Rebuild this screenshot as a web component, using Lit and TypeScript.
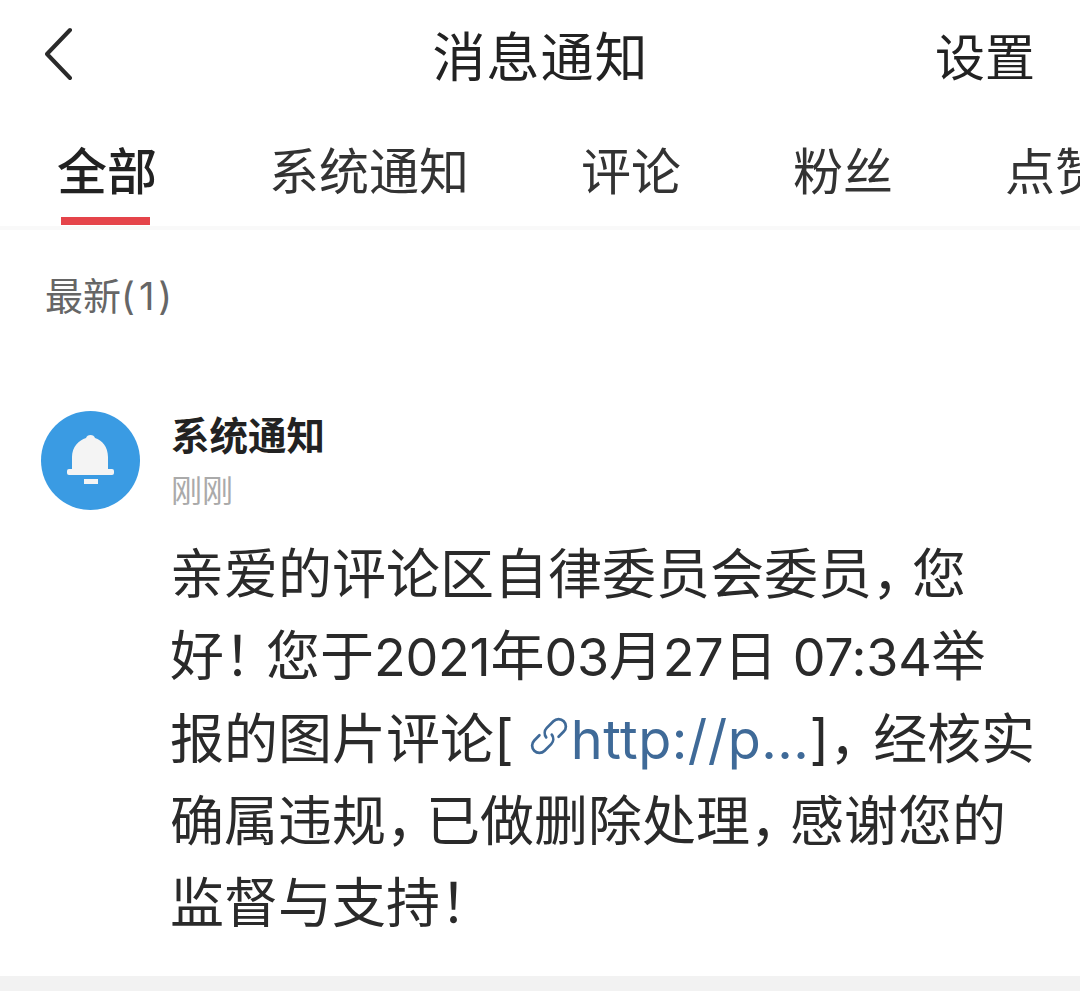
import { LitElement, html, css } from 'lit';
import { customElement } from 'lit/decorators.js';

const tabs = ['全部', '系统通知', '评论', '粉丝', '点赞'];

@customElement('app-root')
export class AppRoot extends LitElement {
  static styles = css`
    :host {
      display: block;
      width: 1080px;
      height: 991px;
      overflow: hidden;
      background: #fff;
      color: #222;
      font-family: Inter, 'Noto Sans CJK SC', 'Noto Sans', sans-serif;
    }

    .header {
      display: grid;
      grid-template-columns: 1fr auto 1fr;
      align-items: center;
      height: 114px;
      padding: 0 45px 0 46px;
    }

    .back {
      display: block;
      width: 30px;
      height: 60px;
      margin-left: -1px;
    }

    .title {
      font-size: 53px;
      line-height: 116px;
      height: 114px;
      letter-spacing: 1px;
    }

    .settings {
      justify-self: end;
      font-size: 50px;
      line-height: 116px;
      height: 114px;
    }

    .tabs {
      display: flex;
      gap: 112px;
      height: 116px;
      padding-left: 57px;
      white-space: nowrap;
      border-bottom: 4px solid #f9f9f9;
      box-sizing: border-box;
    }

    .tab {
      position: relative;
      font-size: 50px;
      line-height: 117px;
      height: 112px;
      color: #333;
    }

    .tab.active {
      font-weight: 500;
      color: #222;
    }

    .tab.active::after {
      content: '';
      position: absolute;
      left: 4px;
      right: 7px;
      bottom: 1px;
      height: 8px;
      background: #e5444a;
    }

    .section {
      margin: 0;
      padding: 39px 0 0 45px;
      height: 181px;
      box-sizing: border-box;
      font-size: 38px;
      font-weight: 400;
      line-height: 54px;
      color: #666;
    }

    .count {
      letter-spacing: 4px;
    }

    .item {
      display: flex;
      gap: 31px;
      padding-left: 41px;
      height: 565px;
      box-sizing: border-box;
    }

    .avatar {
      flex: none;
      width: 99px;
      height: 99px;
      border-radius: 50%;
      background: #3a9be3;
    }

    .avatar svg {
      display: block;
    }

    .name {
      margin-top: -2px;
      font-size: 38.500px;
      font-weight: 700;
      line-height: 54px;
      color: #222;
    }

    .time {
      margin-top: 5px;
      font-size: 31px;
      line-height: 46px;
      color: #aaa;
    }

    .body {
      margin-top: 20px;
      margin-left: -1px;
      font-size: 54px;
      line-height: 82px;
      white-space: nowrap;
      color: #2a2a2a;
    }

    .line {
      display: block;
    }

    /* fullwidth punctuation sits tighter than the default CJK advance */
    .comma {
      letter-spacing: -14px;
    }

    .comma.wide {
      letter-spacing: -10px;
    }

    .bang {
      letter-spacing: -12px;
    }

    .num {
      font-size: 52px;
      letter-spacing: -0.250px;
    }

    .link {
      color: #3f6a98;
      letter-spacing: 0.5px;
    }

    .link svg {
      width: 50px;
      height: 50px;
      vertical-align: -2px;
      margin: 0 -3px 0 10px;
    }

    .band {
      height: 15px;
      background: #f2f2f2;
    }
  `;

  render() {
    const comma = html`<span class="comma">，</span>`;
    return html`
      <div class="header">
        <svg class="back" viewBox="0 0 30 60" fill="none" stroke="#2a2a2a" stroke-width="4" stroke-linecap="round" stroke-linejoin="round">
          <path d="M25 3 L2 27 L25 51" />
        </svg>
        <div class="title">消息通知</div>
        <div class="settings">设置</div>
      </div>
      <div class="tabs">
        ${tabs.map((t, i) => html`<div class="tab ${i === 0 ? 'active' : ''}">${t}</div>`)}
      </div>
      <h2 class="section">最新<span class="count">(1)</span></h2>
      <div class="item">
        <div class="avatar">
          <svg viewBox="0 0 99 99" width="99" height="99" fill="#f4f4f4">
            <path d="M31 59 V46 C31 36 38 29 45 27 Q46 24 49.500 24 Q53 24 54 27 C61 29 67 36 67 46 V59 Z" />
            <rect x="26" y="58" width="47" height="6" rx="2" />
            <rect x="43" y="68" width="14" height="5" />
          </svg>
        </div>
        <div>
          <div class="name">系统通知</div>
          <div class="time">刚刚</div>
          <div class="body">
            <span class="line">亲爱的评论区自律委员会委员${comma}您</span>
            <span class="line">好<span class="bang">！</span>您于<span class="num">2021</span>年<span class="num">03</span>月<span class="num">27</span>日 <span class="num">07:34</span>举</span>
            <span class="line">报的图片评论[<span class="link"><svg viewBox="0 0 24 24" fill="none" stroke="currentColor" stroke-width="1.300" stroke-linecap="round"><g transform="rotate(-45 12 12)"><path d="M9 8.500H5.500a3.500 3.500 0 0 0 0 7H10a3.500 3.500 0 0 0 3.400-3" /><path d="M15 15.500h3.500a3.500 3.500 0 0 0 0-7H14a3.500 3.500 0 0 0-3.400 3" /></g></svg>http://p...</span>]<span class="comma wide">，</span>经核实</span>
            <span class="line">确属违规${comma}已做删除处理${comma}感谢您的</span>
            <span class="line">监督与支持！</span>
          </div>
        </div>
      </div>
      <div class="band"></div>
    `;
  }
}
